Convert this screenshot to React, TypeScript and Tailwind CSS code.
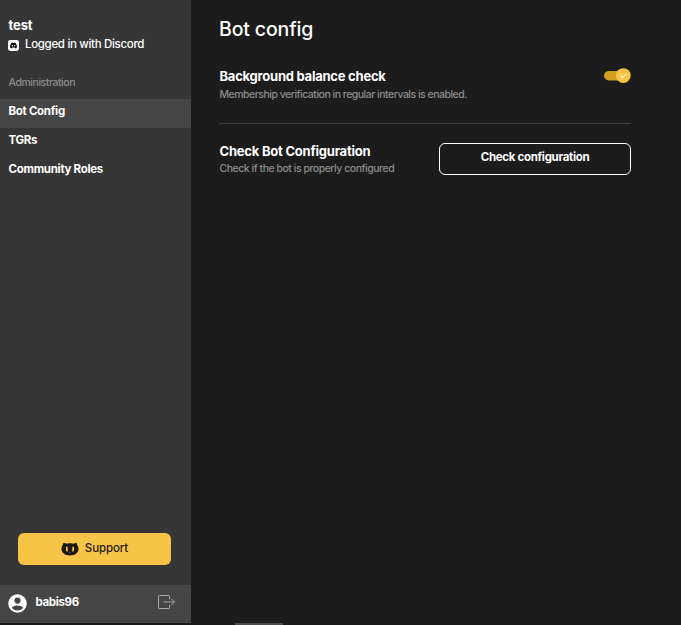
import React from "react";

function DiscordBadge() {
  return (
    <svg width="11" height="11" viewBox="0 0 11 11" className="shrink-0">
      <rect width="11" height="11" rx="2.4" fill="#fff" />
      <path d="M3.4 2.900 4.700 2.600l.3.500h1l.3-.5 1.300.3c.9 1.200 1.500 2.700 1.400 4.600-.6.500-1.200.8-1.800.9l-.5-.8H4.300l-.5.8c-.6-.1-1.200-.4-1.800-.9-.1-1.900.5-3.400 1.400-4.600Z" fill="#111" />
      <circle cx="4.300" cy="5.700" r=".7" fill="#fff" />
      <circle cx="6.700" cy="5.700" r=".7" fill="#fff" />
    </svg>
  );
}

function CatIcon() {
  return (
    <svg width="18" height="14" viewBox="0 0 18 14" className="shrink-0">
      <path d="M2.500.8 6 1.700c2-.5 4-.5 6 0L15.500.8c.5.8.8 1.600.8 2.400.9 1 1.200 2.200 1.200 3.600 0 4-3.400 6.700-8.500 6.700S.5 10.800.5 6.800c0-1.400.3-2.600 1.200-3.600 0-.8.3-1.600.8-2.400Z" fill="#1c190e" />
      <path d="M5 4.800h1.700v5.200L5 8.800ZM13 4.800h-1.700v5.200L13 8.800Z" fill="#f6c447" />
      <path d="M8.200 10.500h1.600L9 11.400Z" fill="#b08b33" />
    </svg>
  );
}

function UserIcon() {
  return (
    <svg width="19" height="19" viewBox="0 0 19 19" className="shrink-0">
      <circle cx="9.500" cy="9.500" r="9.300" fill="#fff" />
      <circle cx="9.500" cy="6.600" r="3.100" fill="#454545" />
      <path d="M3.800 13.700c1.400-1.500 3.400-2.200 5.700-2.200s4.300.7 5.700 2.200c-1.300 1.800-3.300 2.800-5.700 2.800s-4.400-1-5.700-2.800Z" fill="#454545" />
    </svg>
  );
}

function LogoutIcon() {
  return (
    <svg width="18" height="14" viewBox="0 0 18 14" fill="none" stroke="#adadad" className="-mt-[3px] shrink-0">
      <path d="M11.500 4V1.500a1 1 0 0 0-1-1h-9a1 1 0 0 0-1 1v11a1 1 0 0 0 1 1h9a1 1 0 0 0 1-1V10M5.500 7H16.500M13.300 3.800 16.500 7l-3.200 3.200" />
    </svg>
  );
}

function NavItem({ label, active }: { label: string; active?: boolean }) {
  return (
    <a className={`flex h-[29px] items-center pb-1 pl-[8.500px] text-[11.500px] font-bold tracking-[-0.300px] text-white ${active ? "bg-[#454545]" : ""}`}>
      {label}
    </a>
  );
}

export default function App() {
  return (
    <div className="flex h-[625px] w-[681px] flex-col overflow-hidden bg-[#1c1c1c] font-['Inter',sans-serif] text-white">
      <div className="flex h-[623px]">
        <aside className="flex w-[191px] flex-col bg-[#363636]">
          <header className="flex h-[99px] flex-col pl-2 pt-[16px]">
            <div className="h-[19px] pl-[0.500px] text-[13px] leading-[18px] font-bold tracking-[-0.100px]">test</div>
            <div className="flex h-[18px] items-center gap-[6px] pr-2 text-[11.500px] leading-[18px] font-medium whitespace-nowrap">
              <span className="pt-[2px]"><DiscordBadge /></span>
              <span className="pb-px tracking-[-0.320px]">Logged in with Discord</span>
            </div>
            <div className="mt-[22px] pl-[0.500px] text-[10.500px] leading-[16px] font-medium tracking-[-0.450px] text-[#8c8c8c]">
              Administration
            </div>
          </header>
          <nav>
            <NavItem label="Bot Config" active />
            <NavItem label="TGRs" />
            <NavItem label="Community Roles" />
          </nav>
          <button className="mt-auto mb-5 ml-[18px] flex h-8 w-[153px] items-center justify-center gap-[6px] rounded-[6px] bg-[#f6c447] text-[11.500px] font-medium tracking-[-0.100px] text-[#1c190e]">
            <CatIcon />
            <span>Support</span>
          </button>
          <footer className="flex h-[38px] items-center bg-[#454545] pb-px pl-2 pr-[15px]">
            <UserIcon />
            <span className="ml-[8.500px] flex-1 pb-[2px] text-[11.500px] font-bold tracking-[-0.350px]">babis96</span>
            <LogoutIcon />
          </footer>
        </aside>
        <main className="ml-[28px] w-[412px] pt-[16px]">
          <h1 className="h-[52px] text-[19.500px] leading-[27px] font-medium tracking-[-0.150px]">Bot config</h1>
          <section className="flex h-[56px] justify-between border-b border-[#3b3b3b]">
            <div className="pl-[0.500px]">
              <h2 className="-mt-px h-[19px] text-[13px] leading-[18px] font-bold tracking-[-0.240px]">Background balance check</h2>
              <p className="text-[10.500px] leading-[17px] font-medium tracking-[-0.500px] text-[#8c8c8c]">Membership verification in regular intervals is enabled.</p>
            </div>
            <svg width="28" height="16" viewBox="0 0 28 16">
              <rect x="1" y="3" width="25" height="9.500" rx="4.750" fill="#cf9e1d" />
              <circle cx="20.300" cy="7.600" r="7.400" fill="#f6c447" />
              <path d="m17.200 7.700 2.200 2 3.900-3.900" fill="none" stroke="#fff7dd" strokeWidth="1.100" />
            </svg>
          </section>
          <section className="mt-[18px] flex justify-between">
            <div className="pl-[0.500px]">
              <h2 className="text-[13px] leading-[18px] font-bold tracking-[-0.220px]">Check Bot Configuration</h2>
              <p className="text-[10.500px] leading-[17px] font-medium tracking-[-0.480px] text-[#8c8c8c]">Check if the bot is properly configured</p>
            </div>
            <button className="mt-px h-8 w-[192px] rounded-[6px] border border-white pb-[2px] text-[11.500px] font-bold tracking-[-0.320px]">Check configuration</button>
          </section>
        </main>
      </div>
      <div className="h-[2px] bg-[#1c1719] pl-[235px]">
        <div className="h-[2px] w-12 bg-[#4b4b4b]" />
      </div>
    </div>
  );
}
